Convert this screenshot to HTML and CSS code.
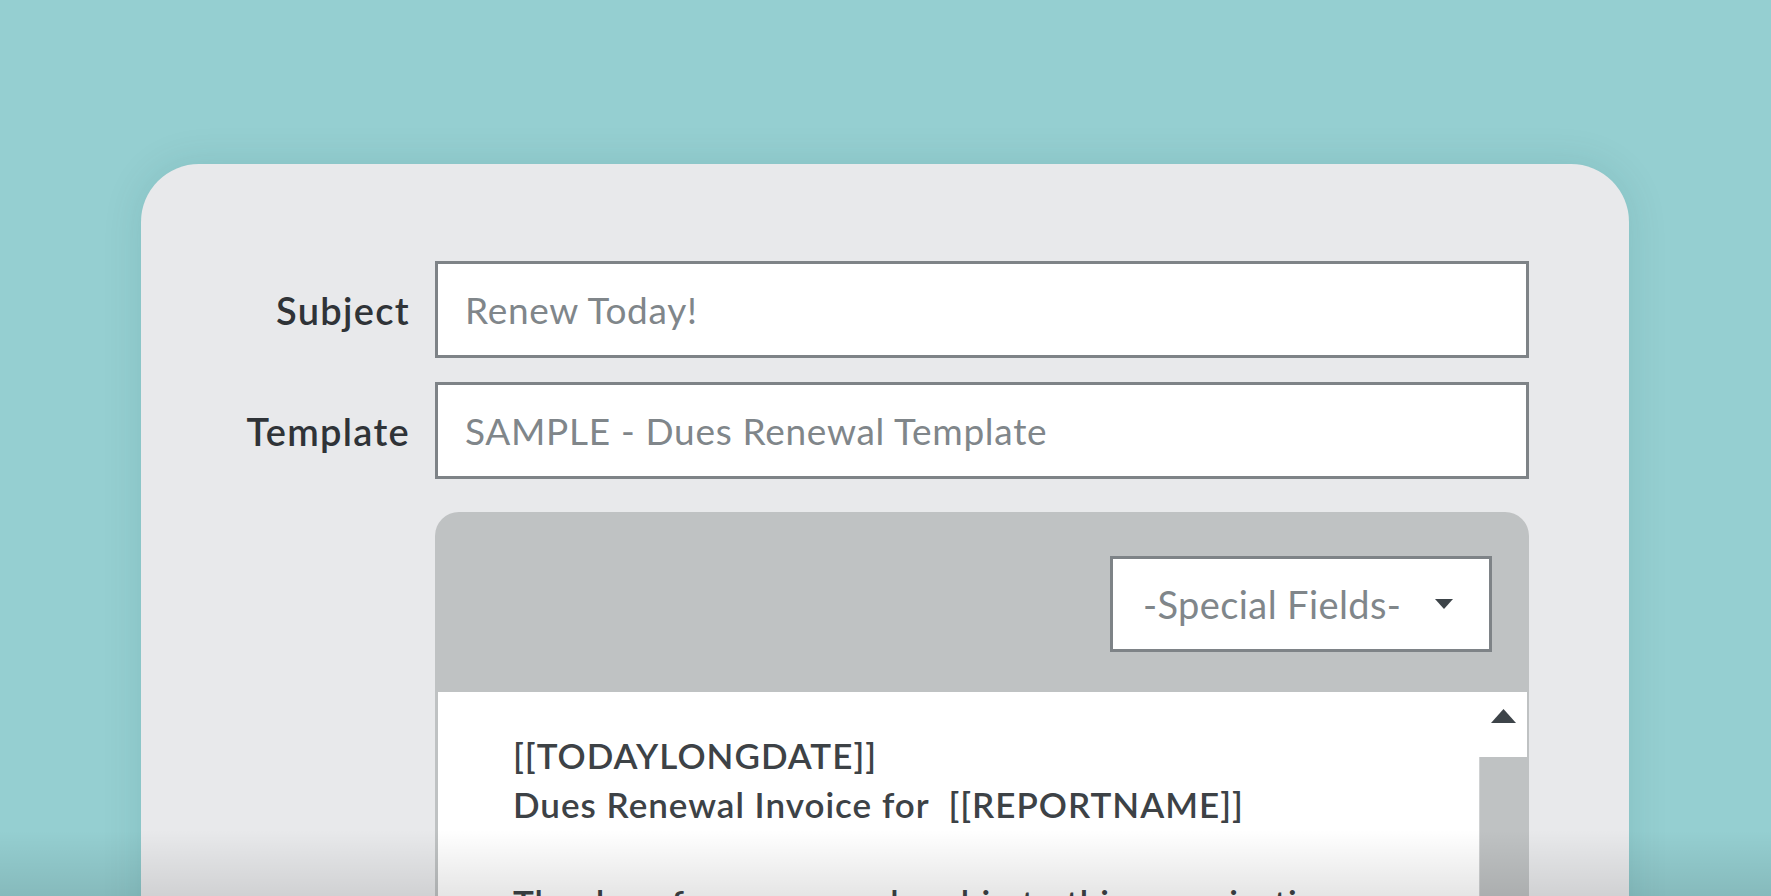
FILE: index.html
```html
<!DOCTYPE html>
<html lang="en">
<head>
<meta charset="utf-8">
<title>Email Template</title>
<link rel="stylesheet" href="styles.css">
</head>
<body>
<div class="stage">
  <div class="card">
    <div class="form">
      <label class="label">Subject</label>
      <div class="input">Renew Today!</div>
      <label class="label">Template</label>
      <div class="input">SAMPLE - Dues Renewal Template</div>
      <div class="spacer"></div>
      <div class="editor">
        <div class="toolbar">
          <div class="select">
            <span class="select-text">-Special Fields-</span>
            <svg class="caret" width="18" height="10" viewBox="0 0 18 10"><path d="M0 0 L18 0 L9 10 Z" fill="#3d4449"/></svg>
          </div>
        </div>
        <div class="content">
          <div class="text">
            <p class="line">[[TODAYLONGDATE]]</p>
            <p class="line">Dues Renewal Invoice for&nbsp; [[REPORTNAME]]</p>
            <p class="line">&nbsp;</p>
            <p class="line">The dues for your membership to this organization</p>
          </div>
          <div class="scrollbar">
            <div class="scroll-btn">
              <svg width="25" height="14" viewBox="0 0 25 14"><path d="M12.5 0 L25 14 L0 14 Z" fill="#3d4449"/></svg>
            </div>
            <div class="scroll-thumb"></div>
          </div>
        </div>
      </div>
    </div>
  </div>
  <div class="fade"></div>
</div>
</body>
</html>
```

FILE: styles.css
```css
html, body {
  margin: 0;
  padding: 0;
  height: 100%;
}
body {
  background: #95cfd1;
  overflow: hidden;
  font-family: "Lato", "Noto Sans", sans-serif;
}
.stage {
  position: relative;
  height: 896px;
  overflow: hidden;
  padding-top: 164px;
  box-sizing: border-box;
}
.card {
  margin-left: 141px;
  width: 1488px;
  height: 900px;
  background: #e8e9eb;
  border-radius: 58px 58px 0 0;
  box-shadow: 0 0 40px rgba(20, 70, 75, 0.12);
  padding-top: 97px;
  box-sizing: border-box;
}
.form {
  display: grid;
  grid-template-columns: 269px 1094px;
  column-gap: 25px;
  row-gap: 24px;
  align-items: center;
}
.label {
  justify-self: end;
  font-size: 38px;
  font-weight: 600;
  letter-spacing: 1.3px;
  color: #2f3337;
}
.input {
  height: 97px;
  box-sizing: border-box;
  border: 3px solid #7e8387;
  background: #fff;
  padding-left: 27px;
  display: flex;
  align-items: center;
  font-size: 37px;
  font-weight: 400;
  letter-spacing: 0.7px;
  color: #80868a;
}
.spacer {
  height: 1px;
}
.editor {
  margin-top: 9px;
  align-self: start;
  background: #bfc2c3;
  border-radius: 24px 24px 0 0;
  padding: 0 2px 0 3px;
  height: 420px;
}
.toolbar {
  display: flex;
  justify-content: flex-end;
  padding: 44px 35px 40px 0;
}
.select {
  width: 382px;
  height: 96px;
  box-sizing: border-box;
  border: 3px solid #7e8387;
  background: #fff;
  display: flex;
  align-items: center;
  justify-content: space-between;
  padding: 0 36px 0 30px;
  font-size: 38px;
  letter-spacing: 0.4px;
  color: #80868a;
}
.caret {
  display: block;
}
.content {
  display: flex;
  background: #fff;
  height: 300px;
}
.text {
  flex: 1;
  padding: 39px 0 0 75px;
}
.line {
  margin: 0;
  font-size: 35px;
  line-height: 49px;
  font-weight: 600;
  letter-spacing: 1px;
  color: #3d4246;
  white-space: pre;
}
.scrollbar {
  width: 48px;
  display: flex;
  flex-direction: column;
}
.scroll-btn {
  height: 65px;
  display: flex;
  justify-content: center;
  padding-top: 17px;
  box-sizing: border-box;
}
.scroll-btn svg {
  display: block;
}
.scroll-thumb {
  flex: 1;
  background: #bfc2c3;
  border-left: 1px solid #d0d2d3;
}
.fade {
  position: absolute;
  left: 0;
  right: 0;
  bottom: 0;
  height: 66px;
  background: linear-gradient(to bottom, rgba(0, 0, 0, 0), rgba(0, 0, 0, 0.1));
  pointer-events: none;
}
```
